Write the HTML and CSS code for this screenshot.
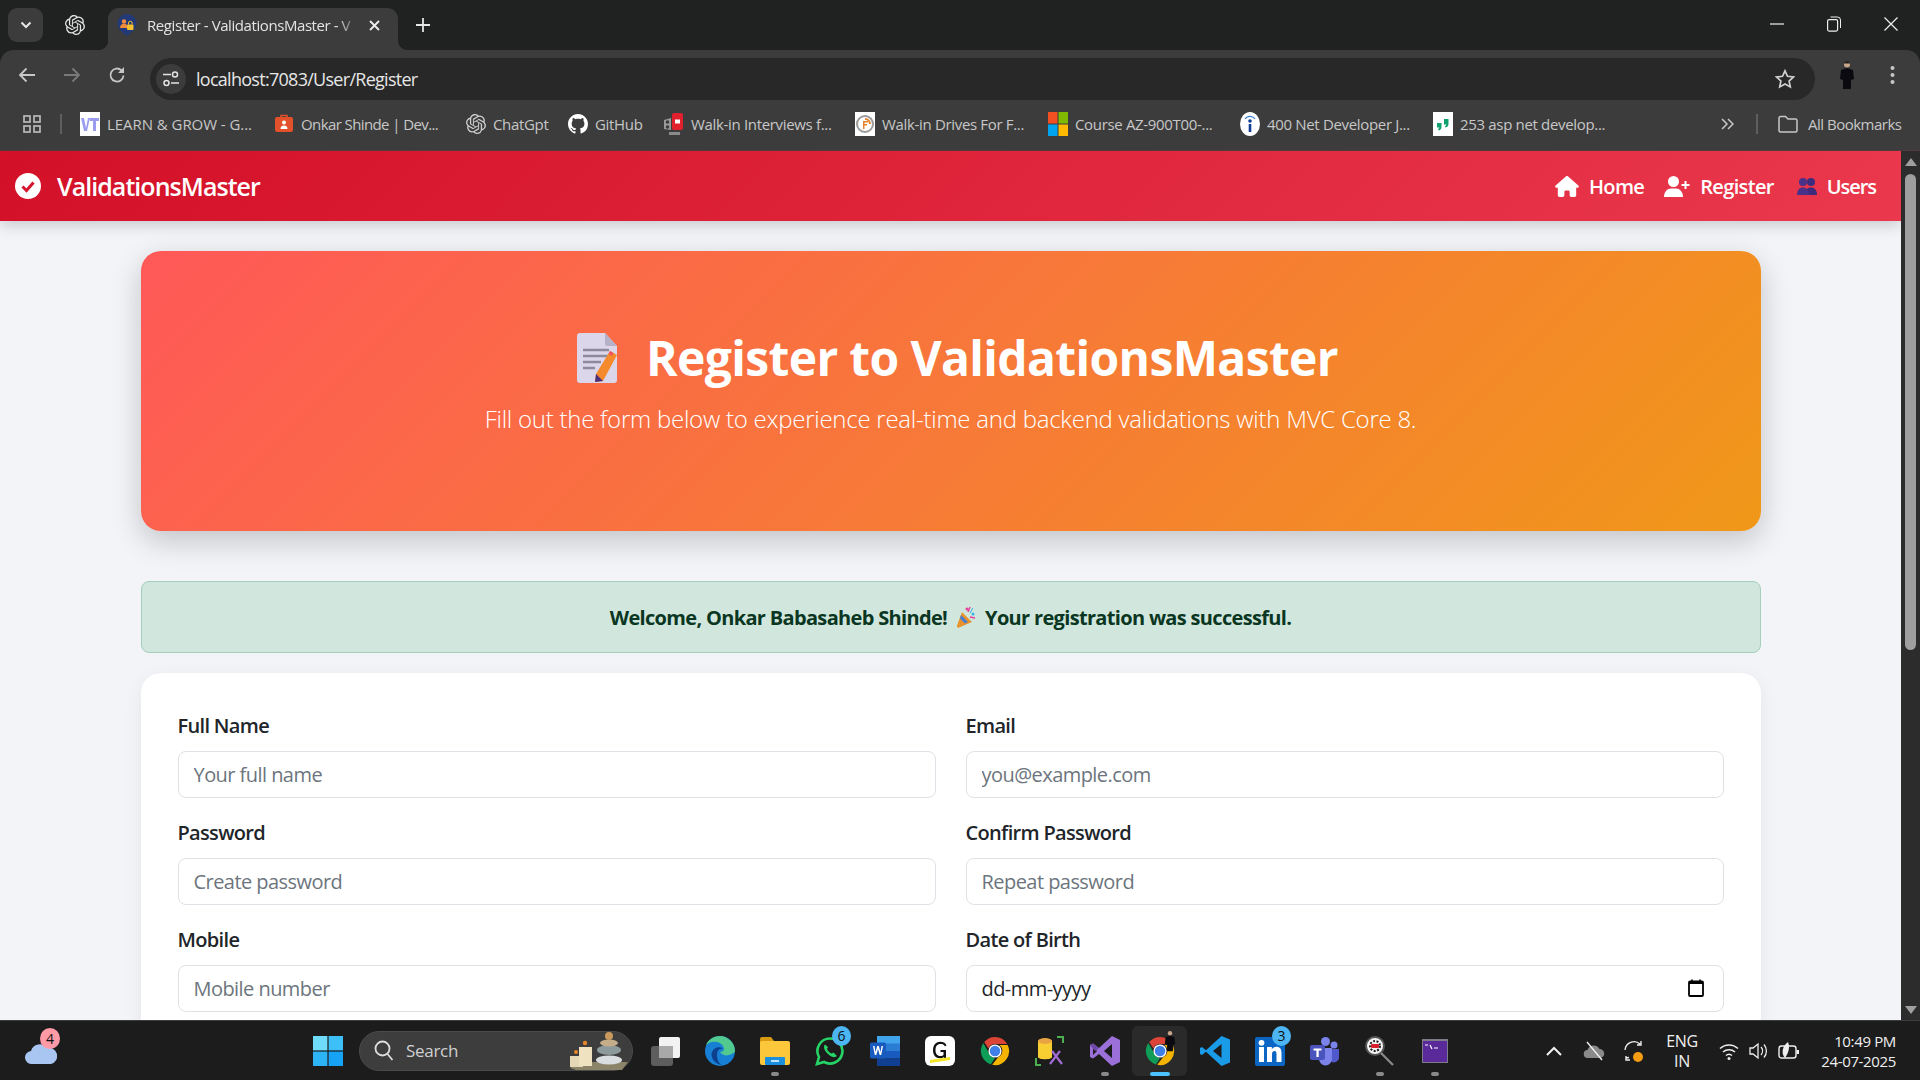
FILE: index.html
```html
<!DOCTYPE html>
<html lang="en">
<head>
<meta charset="utf-8">
<title>Register - ValidationsMaster</title>
<link rel="stylesheet" href="styles.css">
</head>
<body>
<svg class="defs" width="0" height="0" aria-hidden="true">
  <defs>
    <symbol id="knot" viewBox="0 0 24 24">
      <path fill="currentColor" d="M22.2819 9.8211a5.9847 5.9847 0 0 0-.5157-4.9108 6.0462 6.0462 0 0 0-6.5098-2.9A6.0651 6.0651 0 0 0 4.9807 4.1818a5.9847 5.9847 0 0 0-3.9977 2.9 6.0462 6.0462 0 0 0 .7427 7.0966 5.98 5.98 0 0 0 .511 4.9107 6.051 6.051 0 0 0 6.5146 2.9001A5.9847 5.9847 0 0 0 13.2599 24a6.0557 6.0557 0 0 0 5.7718-4.2058 5.9894 5.9894 0 0 0 3.9977-2.9001 6.0557 6.0557 0 0 0-.7475-7.0729zm-9.022 12.6081a4.4755 4.4755 0 0 1-2.8764-1.0408l.1419-.0804 4.7783-2.7582a.7948.7948 0 0 0 .3927-.6813v-6.7369l2.02 1.1686a.071.071 0 0 1 .038.052v5.5826a4.504 4.504 0 0 1-4.4945 4.4944zm-9.6607-4.1254a4.4708 4.4708 0 0 1-.5346-3.0137l.142.0852 4.783 2.7582a.7712.7712 0 0 0 .7806 0l5.8428-3.3685v2.3324a.0804.0804 0 0 1-.0332.0615L9.74 19.9502a4.4992 4.4992 0 0 1-6.1408-1.6464zM2.3408 7.8956a4.485 4.485 0 0 1 2.3655-1.9728V11.6a.7664.7664 0 0 0 .3879.6765l5.8144 3.3543-2.0201 1.1685a.0757.0757 0 0 1-.071 0l-4.8303-2.7865A4.504 4.504 0 0 1 2.3408 7.872zm16.5963 3.8558L13.1038 8.364 15.1192 7.2a.0757.0757 0 0 1 .071 0l4.8303 2.7913a4.4944 4.4944 0 0 1-.6765 8.1042v-5.6772a.79.79 0 0 0-.407-.667zm2.0107-3.0231l-.142-.0852-4.7735-2.7818a.7759.7759 0 0 0-.7854 0L9.409 9.2297V6.8974a.0662.0662 0 0 1 .0284-.0615l4.8303-2.7866a4.4992 4.4992 0 0 1 6.6802 4.66zM8.3065 12.863l-2.02-1.1638a.0804.0804 0 0 1-.038-.0567V6.0742a4.4992 4.4992 0 0 1 7.3757-3.4537l-.142.0805L8.704 5.459a.7948.7948 0 0 0-.3927.6813zm1.0976-2.3654l2.602-1.4998 2.6069 1.4998v2.9994l-2.5974 1.4997-2.6067-1.4997Z"/>
    </symbol>
    <symbol id="chrome" viewBox="0 0 32 32">
      <path fill="#db4437" d="M16 1a15 15 0 0 1 13 7.5H16a7.500 7.500 0 0 0-7 4.800L4.500 6.500A15 15 0 0 1 16 1z"/>
      <path fill="#0f9d58" d="M3.500 7.500l6.500 11.500a7.500 7.500 0 0 0 6 4.500L11.500 30.300A15 15 0 0 1 3.500 7.500z"/>
      <path fill="#f4b400" d="M29.500 9.500A15 15 0 0 1 13 30.700L19.500 22.500a7.500 7.500 0 0 0 1-13z"/>
      <circle cx="16" cy="16" r="7" fill="#fff"/>
      <circle cx="16" cy="16" r="5.600" fill="#3f7fe8"/>
    </symbol>
  </defs>
</svg>

<div class="screen">
  <header class="tabstrip">
    <button class="tabsearch" aria-label="Search tabs">
      <svg width="12" height="8" viewBox="0 0 12 8"><path d="M1.500 1.500 6 6l4.500-4.500" fill="none" stroke="#e6e6e6" stroke-width="2"/></svg>
    </button>
    <svg class="pinned" width="20" height="20"><use href="#knot"/></svg>
    <div class="tab">
      <svg class="favicon" width="20" height="22" viewBox="0 0 20 22">
        <path d="M10 0a9.500 9.500 0 0 1 9.500 9.500C19.500 15 14 19 10 22 6 19 .5 15 .5 9.500A9.500 9.500 0 0 1 10 0z" fill="#243a78"/>
        <circle cx="7" cy="7.500" r="2.200" fill="#f08a3c"/>
        <path d="M3 14c0-3 2-4.200 4-4.200 1.500 0 2.500.5 3 1.500V14z" fill="#f08a3c"/>
        <rect x="10" y="10.500" width="6.500" height="5.500" rx="1" fill="#f7c12e"/>
        <path d="M11.500 10.500V9a1.800 1.800 0 0 1 3.600 0v1.500" fill="none" stroke="#f7c12e"/>
      </svg>
      <span class="tabtitle">Register - ValidationsMaster - V</span>
      <svg class="tabclose" width="11" height="11" viewBox="0 0 11 11"><path d="M1 1l9 9M10 1l-9 9" stroke="#eee" stroke-width="1.800"/></svg>
    </div>
    <svg class="newtab" width="14" height="14" viewBox="0 0 14 14"><path d="M7 0v14M0 7h14" stroke="#e6e6e6" stroke-width="1.800"/></svg>
    <div class="winctrls">
      <svg width="14" height="14" viewBox="0 0 14 14"><path d="M0 7h14" stroke="#eee" stroke-width="1.200"/></svg>
      <svg width="14" height="16" viewBox="0 0 14 16"><rect x=".6" y="3.600" width="10" height="11.500" rx="1.500" fill="none" stroke="#eee" stroke-width="1.200"/><path d="M3.500 1h7a3 3 0 0 1 3 3v8" fill="none" stroke="#eee"/></svg>
      <svg width="14" height="14" viewBox="0 0 14 14"><path d="M.5.500l13 13M13.500.500l-13 13" stroke="#eee" stroke-width="1.200"/></svg>
    </div>
  </header>

  <div class="toolbar">
    <svg class="navbtn" width="18" height="16" viewBox="0 0 18 16"><path d="M17 8H2M8.500 1.500 2 8l6.500 6.500" fill="none" stroke="#c7c7c7" stroke-width="1.800"/></svg>
    <svg class="navbtn" width="18" height="16" viewBox="0 0 18 16"><path d="M1 8h15M9.500 1.500 16 8l-6.500 6.500" fill="none" stroke="#7a7a7a" stroke-width="1.800"/></svg>
    <svg class="navbtn" width="18" height="18" viewBox="0 0 18 18"><path d="M15.500 9.500A6.500 6.500 0 1 1 13.500 4.300L15.500 6.500" fill="none" stroke="#c7c7c7" stroke-width="1.800"/><path d="M16 1v6h-6" fill="#c7c7c7"/></svg>
    <div class="omnibox">
      <span class="siteinfo">
        <svg width="16" height="16" viewBox="0 0 16 16"><path d="M0 3.500h8M8 12h8" stroke="#e3e3e3" stroke-width="1.600" fill="none"/><circle cx="12" cy="3.500" r="2.500" fill="none" stroke="#e3e3e3" stroke-width="1.500"/><circle cx="3.500" cy="12" r="2.500" fill="none" stroke="#e3e3e3" stroke-width="1.500"/></svg>
      </span>
      <span class="url">localhost:7083/User/Register</span>
      <svg class="star" width="20" height="20" viewBox="0 0 20 20"><path d="M10 1.800l2.500 5.500 6 .7-4.400 4 1.200 5.900L10 15l-5.300 2.900 1.200-5.900-4.400-4 6-.7z" fill="none" stroke="#d0d0d0" stroke-width="1.700"/></svg>
    </div>
    <svg class="avatar" width="16" height="30" viewBox="0 0 16 30"><circle cx="8" cy="4.500" r="3" fill="#c9a58a"/><path d="M8 1c-2 0-3 1-3 2.500h6C11 2 10 1 8 1z" fill="#222"/><path d="M2 10l6-2 6 2 1 9-3 1v9H4v-9l-3-1z" fill="#0a0a10"/></svg>
    <svg class="kebab" width="5" height="20" viewBox="0 0 5 20"><circle cx="2.500" cy="3" r="2" fill="#c7c7c7"/><circle cx="2.500" cy="10" r="2" fill="#c7c7c7"/><circle cx="2.500" cy="17" r="2" fill="#c7c7c7"/></svg>
  </div>

  <nav class="bookmarks">
    <svg class="apps" width="18" height="18" viewBox="0 0 18 18"><g fill="none" stroke="#b9b9b9" stroke-width="1.700"><rect x="1" y="1" width="6" height="6"/><rect x="11" y="1" width="6" height="6"/><rect x="1" y="11" width="6" height="6"/><rect x="11" y="11" width="6" height="6"/></g></svg>
    <span class="barsep"></span>
    <div class="bmgrid">
      <a class="bm"><svg width="20" height="24" viewBox="0 0 20 24"><rect width="20" height="24" fill="#fff"/><path d="M1 6h3l2 10 2-10h2l-3 13H4zM10 6h9v3h-3v10h-3V9h-3z" fill="#9a9cf0"/></svg><span>LEARN &amp; GROW - G...</span></a>
      <a class="bm"><svg width="20" height="20" viewBox="0 0 20 20"><rect x="1" y="3" width="18" height="15" rx="2" fill="#e2512a"/><path d="M7 3V1.500h6V3" stroke="#e2512a" fill="none" stroke-width="1.500"/><circle cx="10" cy="8.500" r="2" fill="#fff"/><path d="M6.500 15c0-2.500 1.500-3.500 3.500-3.500s3.500 1 3.500 3.500z" fill="#fff"/></svg><span>Onkar Shinde | Dev...</span></a>
      <a class="bm knotbm"><svg width="20" height="20"><use href="#knot"/></svg><span>ChatGpt</span></a>
      <a class="bm"><svg width="20" height="20" viewBox="0 0 16 16"><path fill="#fff" d="M8 0C3.580 0 0 3.580 0 8c0 3.540 2.290 6.530 5.470 7.590.4.070.55-.17.55-.38 0-.19-.01-.82-.01-1.490-2.010.37-2.530-.49-2.690-.94-.09-.23-.48-.94-.82-1.130-.28-.15-.68-.52-.01-.53.63-.01 1.080.58 1.230.82.720 1.210 1.870.87 2.330.66.070-.52.280-.87.510-1.070-1.780-.2-3.640-.89-3.640-3.950 0-.87.310-1.590.820-2.150-.08-.2-.36-1.020.08-2.120 0 0 .67-.21 2.200.82.640-.18 1.320-.27 2-.27s1.360.09 2 .27c1.530-1.040 2.200-.82 2.200-.82.440 1.100.160 1.920.080 2.120.510.560.820 1.270.820 2.150 0 3.070-1.870 3.750-3.650 3.950.290.250.540.730.540 1.480 0 1.070-.010 1.930-.010 2.200 0 .21.150.46.550.38A8.010 8.010 0 0 0 16 8c0-4.420-3.580-8-8-8z"/></svg><span>GitHub</span></a>
      <a class="bm"><svg width="20" height="24" viewBox="0 0 20 24"><path d="M0 8l7-2v12l-7-1z" fill="#9a9a9a"/><circle cx="3.500" cy="10" r="1.800" fill="#3c3c3c"/><circle cx="3.500" cy="15" r="1.800" fill="#3c3c3c"/><rect x="8" y="1" width="11" height="17" rx="2" fill="#e0202c"/><rect x="11" y="7.500" width="5" height="4" fill="#fff"/><path d="M5 20h11v3H5z" fill="#8a8a8a"/></svg><span>Walk-in Interviews f...</span></a>
      <a class="bm"><svg width="20" height="24" viewBox="0 0 20 24"><rect width="20" height="24" fill="#fff"/><circle cx="10" cy="12" r="8" fill="none" stroke="#9a9a9a" stroke-width="2"/><path d="M10 7a5 5 0 0 1 5 5" fill="none" stroke="#e8832c" stroke-width="2"/><path d="M8 9h5v1.500H9.500V12H12v1.500H9.500V17H8z" fill="#e8832c"/></svg><span>Walk-in Drives For F...</span></a>
      <a class="bm"><svg width="20" height="24" viewBox="0 0 20 24"><rect width="9.500" height="11.500" fill="#f25022"/><rect x="10.500" width="9.500" height="11.500" fill="#7fba00"/><rect y="12.500" width="9.500" height="11.500" fill="#00a4ef"/><rect x="10.500" y="12.500" width="9.500" height="11.500" fill="#ffb900"/></svg><span>Course AZ-900T00-...</span></a>
      <a class="bm"><svg width="20" height="24" viewBox="0 0 20 24"><ellipse cx="10" cy="12" rx="10" ry="12" fill="#fff"/><circle cx="10" cy="9" r="1.800" fill="#123d96"/><rect x="8.700" y="12" width="2.600" height="8" fill="#123d96"/><path d="M5 7a6 6 0 0 1 10 0" fill="none" stroke="#3a7fd5" stroke-width="1.200"/></svg><span>400 Net Developer J...</span></a>
      <a class="bm"><svg width="20" height="24" viewBox="0 0 20 24"><rect width="20" height="24" fill="#fff"/><path d="M4 11h4.500v4c0 2-1 3-3 3.500L5 17c1-.3 1.300-1 1.300-1.500H4zM11 7h4.500v5c0 2-1 3-3 3.500L12 14c1-.3 1.300-1 1.300-1.500H11z" fill="#10a06c"/></svg><span>253 asp net develop...</span></a>
    </div>
    <svg class="more" width="13" height="12" viewBox="0 0 13 12"><path d="M1 1l5 5-5 5M7 1l5 5-5 5" fill="none" stroke="#c7c7c7" stroke-width="1.500"/></svg>
    <span class="barsep end"></span>
    <a class="bm allbm"><svg width="20" height="18" viewBox="0 0 20 18"><path d="M1 3a1.500 1.500 0 0 1 1.500-1.500h5L10 4h7.500A1.500 1.500 0 0 1 19 5.500v10a1.500 1.500 0 0 1-1.500 1.500h-15A1.500 1.500 0 0 1 1 15.500z" fill="none" stroke="#c7c7c7" stroke-width="1.500"/></svg><span>All Bookmarks</span></a>
  </nav>

  <div class="viewport">
    <div class="page">
      <div class="appbar">
        <a class="brand">
          <svg width="26" height="26" viewBox="0 0 26 26"><circle cx="13" cy="13" r="13" fill="#fff"/><path d="M7.500 13.500l4 4 7-8" fill="none" stroke="#d5152f" stroke-width="3"/></svg>
          <span>ValidationsMaster</span>
        </a>
        <div class="applinks">
          <a class="applink"><svg width="24" height="21" viewBox="0 0 576 512"><path fill="#fff" d="M575.800 255.500c0 18-15 32.100-32 32.100h-32l.7 160.200c0 2.700-.2 5.400-.5 8.100V472c0 22.100-17.900 40-40 40H392c-22.100 0-40-17.900-40-40v-88c0-17.700-14.300-32-32-32h-64c-17.700 0-32 14.300-32 32v88c0 22.100-17.900 40-40 40H104c-22.100 0-40-17.900-40-40V287.600H32c-18 0-32-14-32-32.100c0-9 3-17 10-24L266.400 8c7-7 15-8 22-8s15 2 21 7l255.400 224.500c8 7 12 15 11 24z"/></svg><span>Home</span></a>
          <a class="applink"><svg width="26" height="21" viewBox="0 0 26 21"><circle cx="9.500" cy="5.500" r="5.500" fill="#fff"/><path d="M0 21c0-5.500 3.500-8.500 7-8.500h5c3.500 0 7 3 7 8.500z" fill="#fff"/><path d="M21.500 5v8M17.500 9h8" stroke="#fff" stroke-width="2"/></svg><span>Register</span></a>
          <a class="applink"><svg width="20" height="18" viewBox="0 0 20 18"><circle cx="14" cy="5" r="4" fill="#3f2b7c"/><path d="M8 18c0-5 2.500-7.500 6-7.500s6 2.500 6 7.500z" fill="#3f2b7c"/><circle cx="6" cy="5" r="4" fill="#4a3188"/><path d="M0 18c0-5 2.500-7.500 6-7.500s6 2.500 6 7.500z" fill="#4a3188"/></svg><span>Users</span></a>
        </div>
      </div>

      <main class="content">
        <section class="hero">
          <h1 class="herotitle">
            <svg width="40" height="50" viewBox="0 0 40 50">
              <path d="M3 0h25l12 13v34a3 3 0 0 1-3 3H3a3 3 0 0 1-3-3V3a3 3 0 0 1 3-3z" fill="#dcd6ea"/>
              <path d="M28 0l12 13H30a2 2 0 0 1-2-2z" fill="#b7b0c9"/>
              <path d="M6 17h26M6 23h26M6 29h18M6 35h12" stroke="#8d8a9b" stroke-width="2.500"/>
              <path d="M33 18l7 4-14 26-8 1 1-8z" fill="#f58a2c"/>
              <path d="M33 18l3.500 2-1.500 3-3.500-2z" fill="#f2545f"/>
              <path d="M19 41l7 7-8 1z" fill="#4a2f7a"/>
            </svg>
            <span>Register to ValidationsMaster</span>
          </h1>
          <p class="herosub">Fill out the form below to experience real-time and backend validations with MVC Core 8.</p>
        </section>

        <div class="alert">
          <span>Welcome, Onkar Babasaheb Shinde!</span>
          <svg width="20" height="22" viewBox="0 0 20 22"><path d="M6 6l10 10-13 5.500a1.500 1.500 0 0 1-2-2z" fill="#e8932c"/><path d="M5 9l7 7-3 1.500-5-5z" fill="#4a7fd0"/><circle cx="11" cy="3" r="1.500" fill="#e83f9a"/><circle cx="17" cy="8" r="1.500" fill="#35b6e8"/><path d="M14 1l-2 5M19 12l-5-1" stroke="#e83f9a" stroke-width="1.500"/><path d="M17 2l-3 5" stroke="#35b6e8"/></svg>
          <span>Your registration was successful.</span>
        </div>

        <form class="card">
          <div class="field"><label class="lbl">Full Name</label><input class="inp" type="text" placeholder="Your full name"></div>
          <div class="field"><label class="lbl">Email</label><input class="inp" type="text" placeholder="you@example.com"></div>
          <div class="field"><label class="lbl">Password</label><input class="inp" type="text" placeholder="Create password"></div>
          <div class="field"><label class="lbl">Confirm Password</label><input class="inp" type="text" placeholder="Repeat password"></div>
          <div class="field"><label class="lbl">Mobile</label><input class="inp" type="text" placeholder="Mobile number"></div>
          <div class="field"><label class="lbl">Date of Birth</label>
            <div class="datewrap"><input class="inp" type="text" value="dd-mm-yyyy">
              <svg class="calicon" width="16" height="18" viewBox="0 0 16 18"><path d="M4 .5v3M12 .5v3" stroke="#000" stroke-width="1.600"/><rect x="1" y="2.500" width="14" height="14.500" rx="1" fill="none" stroke="#000" stroke-width="1.800"/><rect x="1" y="2.500" width="14" height="2.500" fill="#000"/></svg>
            </div>
          </div>
        </form>
      </main>
    </div>
    <div class="scrollbar">
      <span class="arrow up"></span>
      <span class="thumb"></span>
      <span class="arrow down"></span>
    </div>
  </div>

  <footer class="taskbar">
    <div class="weather">
      <svg width="32" height="22" viewBox="0 0 32 22"><path d="M7 22a6.500 6.500 0 0 1-1-13 9 9 0 0 1 16-3 7 7 0 0 1 4 16z" fill="#a9c6f2"/></svg>
      <span class="wbadge">4</span>
    </div>
    <svg class="winlogo" width="30" height="30" viewBox="0 0 30 30"><rect width="14.400" height="14.400" fill="#6fdcfb"/><rect x="15.600" width="14.400" height="14.400" fill="#3cc0f7"/><rect y="15.600" width="14.400" height="14.400" fill="#2db4f6"/><rect x="15.600" y="15.600" width="14.400" height="14.400" fill="#16a2f5"/></svg>
    <div class="tsearch">
      <svg width="20" height="21" viewBox="0 0 20 21"><circle cx="8.500" cy="8.500" r="7" fill="none" stroke="#ddd" stroke-width="1.800"/><path d="M13.500 14l5 6" stroke="#ddd" stroke-width="1.800"/></svg>
      <span class="tsearchlabel">Search</span>
      <svg class="candles" width="58" height="38" viewBox="0 0 58 38">
        <path d="M0 36l10-6h48l-6 8H6z" fill="#8b8468"/>
        <rect x="0" y="24" width="13" height="11" fill="#e4d8b6"/><rect x="9" y="15" width="13" height="19" fill="#eee2c0"/>
        <circle cx="6" cy="20" r="2" fill="#e8862a"/><circle cx="15" cy="11" r="2.200" fill="#e8862a"/>
        <ellipse cx="39" cy="28" rx="13" ry="4.500" fill="#dadde0"/><ellipse cx="39" cy="18" rx="12" ry="5" fill="#8c9a9c"/><ellipse cx="39" cy="11" rx="9" ry="3.500" fill="#c5ad89"/><circle cx="39" cy="4" r="4" fill="#c89a5e"/>
      </svg>
    </div>
    <div class="tapps">
      <span class="tapp"><svg width="30" height="30" viewBox="0 0 30 30"><rect x="1" y="10" width="22" height="20" rx="3" fill="#5d5d5d"/><rect x="9" y="1" width="21" height="21" rx="2" fill="#f2f2f2"/><rect x="9" y="10" width="14" height="12" fill="#a9a9a9"/></svg></span>
      <span class="tapp"><svg width="30" height="30" viewBox="0 0 30 30"><circle cx="15" cy="15" r="15" fill="#1780d4"/><path d="M30 15c0-8-7-15-15-15C8 0 3 4 1 9c3-3 7-4 11-3 4 1 7 4 7 7 0 2-2 3-4 3 2 3 6 4 9 3 4-1 6-3 6-4z" fill="#52c98f"/><path d="M12 18c0-4 3-6 6-5-3-3-9-2-11 3-2 6 3 12 10 13-4-2-5-6-5-11z" fill="#0d3f8c"/></svg></span>
      <span class="tapp"><svg width="30" height="30" viewBox="0 0 30 30"><path d="M0 3a2 2 0 0 1 2-2h9l3 4v5H0z" fill="#d89a12"/><rect y="5" width="30" height="24" rx="2" fill="#fcc73a"/><rect x="5" y="21" width="20" height="8" rx="1" fill="#1a8fe0"/><rect x="11" y="24" width="8" height="2" fill="#bfe3fb"/></svg><i class="pip"></i></span>
      <span class="tapp"><svg width="30" height="30" viewBox="0 0 30 30"><path d="M15 2.500A12.500 12.500 0 0 0 4 21l-2 7 7-2A12.500 12.500 0 1 0 15 2.500z" fill="none" stroke="#25d366" stroke-width="2.600"/><path d="M10 8.500c-2 2-1 6 3 9.500 4 3.500 7 4 9 2l-3.500-3.500-2 1c-2-1-3.500-2.500-4.500-4.500l1-2z" fill="#25d366"/></svg><b class="cbadge">6</b></span>
      <span class="tapp"><svg width="30" height="30" viewBox="0 0 30 30"><rect x="7" y="0" width="23" height="8" fill="#41a5ee"/><rect x="7" y="7.500" width="23" height="7.500" fill="#2b7cd3"/><rect x="7" y="15" width="23" height="7.500" fill="#185abd"/><rect x="7" y="22.500" width="23" height="7.500" fill="#103f91"/><rect x="0" y="6.500" width="16" height="16" rx="1.500" fill="#185abd"/><path d="M3 10l1.800 9h1.500L8 13l1.700 6h1.500L13 10h-1.500l-1 6-1.700-6H7.200l-1.700 6-1-6z" fill="#fff"/></svg></span>
      <span class="tapp"><svg width="30" height="30" viewBox="0 0 30 30"><rect width="30" height="30" rx="6" fill="#fff"/><path d="M20 10.500C19 8.500 17.500 8 15.500 8c-3.500 0-5 2.500-5 6s1.500 6 5 6c1.500 0 2.500-.5 3-1v-3h-3v-2h5.500v8h-2v-1c-1 1-2.500 1.200-4 1.200-4.500 0-7-3.500-7-8s2.500-8.500 7-8.500c3 0 5.500 1 6.500 3.500z" fill="#111"/><path d="M5 24l20-3v3L5 27z" fill="#f5e625"/></svg></span>
      <span class="tapp"><svg width="30" height="30"><use href="#chrome"/></svg></span>
      <span class="tapp"><svg width="30" height="30" viewBox="0 0 30 30"><path d="M3 5c0-3 14-3 14 0v16c0 3-14 3-14 0z" fill="#f8cf32"/><ellipse cx="10" cy="5" rx="7" ry="3" fill="#e8a442"/><path d="M22 1h6v6M6 29H1v-7" fill="none" stroke="#4caf50" stroke-width="2"/><path d="M15 28l10-13M27 28L17 15" stroke="#a36bd4" stroke-width="2.200"/></svg></span>
      <span class="tapp"><svg width="30" height="30" viewBox="0 0 30 30"><path d="M22 0l8 4v22l-8 4-13-12-6 4.500L0 21V9l3-1.500L9 12z" fill="#9b71d9"/><path d="M22 8l-8 7 8 7z" fill="#1c1c1c"/><path d="M3 11v8l4-4z" fill="#1c1c1c"/><path d="M0 9l3-1.500L9 12 5 15z" fill="#6f49a8"/></svg><i class="pip"></i></span>
      <span class="tapp active"><svg width="30" height="30"><use href="#chrome"/></svg>
        <svg class="chromeface" width="14" height="22" viewBox="0 0 16 30"><circle cx="8" cy="4.500" r="3" fill="#c9a58a"/><path d="M2 10l6-2 6 2 1 9-3 1v9H4v-9l-3-1z" fill="#0a0a10"/></svg>
        <i class="pip wide"></i></span>
      <span class="tapp"><svg width="30" height="30" viewBox="0 0 30 30"><path d="M21.500 0L30 3.500v23L21.500 30 6 15.800 2 19 0 18V12l2-1 4 3.200z" fill="#1a9be8"/><path d="M21.500 8l-8.500 7 8.500 7z" fill="#1c1c1c"/></svg></span>
      <span class="tapp"><svg width="30" height="30" viewBox="0 0 30 30"><rect y="1" width="30" height="29" rx="2" fill="#0a66c2"/><rect x="4" y="11" width="5" height="15" fill="#fff"/><circle cx="6.500" cy="6.800" r="2.900" fill="#fff"/><path d="M12 11h4.800v2.200c1-1.600 2.500-2.500 4.500-2.500 4 0 5.200 2.600 5.200 6.300V26h-5v-8c0-1.800-.5-3-2-3s-2.500 1.200-2.500 3v8h-5z" fill="#fff"/></svg><b class="cbadge">3</b></span>
      <span class="tapp"><svg width="30" height="30" viewBox="0 0 30 30"><circle cx="24" cy="9" r="3.500" fill="#7b83eb"/><circle cx="15.500" cy="5.500" r="4.500" fill="#7b83eb"/><path d="M19 13h10v9a5 5 0 0 1-8 3.500z" fill="#5059c9"/><path d="M8 12h14v11a6.500 6.500 0 0 1-13 0z" fill="#7b83eb"/><rect x="0" y="9" width="15" height="15" rx="2" fill="#4b53bc"/><path d="M3.500 12.500h8V14.500H8.700v6.500H6.400v-6.500H3.500z" fill="#fff"/></svg></span>
      <span class="tapp"><svg width="30" height="30" viewBox="0 0 30 30"><circle cx="10" cy="10" r="9" fill="#f4f4f4" stroke="#555" stroke-width="2"/><circle cx="10" cy="10" r="5" fill="none" stroke="#222" stroke-width="2" stroke-dasharray="2 1.500"/><rect x="6" y="8" width="8" height="4" rx="1" fill="#d8202c"/><path d="M16 17l12 12" stroke="#8a8a8a" stroke-width="2.200"/></svg><i class="pip"></i></span>
      <span class="tapp"><svg width="26" height="24" viewBox="0 0 26 24"><rect width="26" height="24" fill="#7c7c8a"/><rect x="1" y="2" width="24" height="21" fill="#5a2a9a"/><path d="M3 6h3M8 6l2 4M12 9h4" stroke="#fff" stroke-width="1.200"/></svg><i class="pip"></i></span>
    </div>
    <div class="tray">
      <svg class="trayup" width="16" height="10" viewBox="0 0 16 10"><path d="M1 9l7-7 7 7" fill="none" stroke="#f0f0f0" stroke-width="2"/></svg>
      <svg class="traydrive" width="22" height="20" viewBox="0 0 22 20"><path d="M5 17a4 4 0 0 1-.500-8 6.500 6.500 0 0 1 12-1 4.500 4.500 0 0 1 .5 9z" fill="#8a8a8a"/><path d="M4 1l15 18" stroke="#eee" stroke-width="1.400"/></svg>
      <svg class="traysync" width="22" height="24" viewBox="0 0 22 24"><path d="M2 11a9 9 0 0 1 15-6M18 2v4h-4M3 19l3-.500M3 17v4h4" fill="none" stroke="#eee" stroke-width="1.400"/><circle cx="15" cy="18" r="5" fill="#f59c12"/></svg>
      <div class="lang"><span>ENG</span><span>IN</span></div>
      <svg class="traywifi" width="20" height="18" viewBox="0 0 20 18"><path d="M1 6.500a13 13 0 0 1 18 0M4 10a9 9 0 0 1 12 0M7 13.500a4.500 4.500 0 0 1 6 0" fill="none" stroke="#eee" stroke-width="1.500"/><circle cx="10" cy="16.500" r="1.500" fill="#eee"/></svg>
      <svg class="trayvol" width="20" height="20" viewBox="0 0 20 20"><path d="M1 7h3l5-4v14l-5-4H1z" fill="none" stroke="#eee" stroke-width="1.300"/><path d="M12 6a6 6 0 0 1 0 8M15 3.500a10 10 0 0 1 0 13" fill="none" stroke="#eee" stroke-width="1.300"/></svg>
      <svg class="traybat" width="22" height="20" viewBox="0 0 22 20"><rect x="1" y="5" width="17" height="12" rx="2.500" fill="none" stroke="#eee" stroke-width="1.400"/><rect x="18.500" y="9" width="2.500" height="4" fill="#eee"/><path d="M7 17C3 13 4 5 10 1c2 5 1 10-3 16z" fill="#eee"/></svg>
      <div class="clock"><span>10:49 PM</span><span>24-07-2025</span></div>
    </div>
  </footer>
</div>
</body>
</html>
```

FILE: styles.css
```css
* { box-sizing: border-box; }
html, body { margin: 0; height: 100%; overflow: hidden; }
body { font-family: "Open Sans", "Noto Sans", sans-serif; background: #202221; }
.defs { position: absolute; }
.screen { display: flex; flex-direction: column; height: 1080px; width: 1920px; overflow: hidden; }
a { text-decoration: none; color: inherit; }

/* tab strip */
.tabstrip { height: 50px; flex: none; background: #202221; display: flex; align-items: center; color: #e6e6e6; }
.tabsearch { margin-left: 8px; width: 35px; height: 34px; border: 0; border-radius: 9px; background: #3c3c3c; display: flex; align-items: center; justify-content: center; padding: 0; }
.pinned { margin-left: 22px; color: #e6e6e6; }
.tab { position: relative; margin-left: 23px; align-self: flex-end; width: 290px; height: 42px; background: #3c3c3c; border-radius: 11px 11px 0 0; display: flex; align-items: center; padding: 0 0 8px 9px; }
.tab::before, .tab::after { content: ""; position: absolute; bottom: 0; width: 10px; height: 10px; }
.tab::before { left: -10px; background: radial-gradient(circle at 0 0, transparent 10px, #3c3c3c 10.5px); }
.tab::after { right: -10px; background: radial-gradient(circle at 100% 0, transparent 10px, #3c3c3c 10.5px); }
.favicon { flex: none; }
.tabtitle { margin-left: 10px; width: 212px; overflow: hidden; white-space: nowrap; font-size: 15px; letter-spacing: -.42px; color: #e3e3e3; -webkit-mask-image: linear-gradient(90deg, #000 90%, transparent); mask-image: linear-gradient(90deg, #000 90%, transparent); }
.tabclose { margin-left: 10px; }
.newtab { margin-left: 18px; }
.winctrls { margin-left: auto; display: flex; align-items: center; gap: 43px; padding: 0 22px 2px 0; }

/* toolbar */
.toolbar { height: 50px; flex: none; background: #3c3c3c; border-radius: 14px 14px 0 0; display: flex; align-items: center; padding-left: 18px; }
.navbtn { margin-right: 27px; flex: none; }
.navbtn:nth-child(3) { margin-right: 24px; }
.omnibox { align-self: flex-start; width: 1665px; height: 42px; border-radius: 21px; background: #282828; display: flex; align-items: center; padding-left: 6px; margin-top: 8px; }
.siteinfo { width: 30px; height: 30px; border-radius: 50%; background: #3c3c3c; display: flex; align-items: center; justify-content: center; }
.url { margin-left: 10px; font-size: 18px; letter-spacing: -.72px; color: #e6e6e6; }
.star { margin-left: auto; margin-right: 20px; }
.avatar { margin-left: 24px; }
.kebab { margin-left: 35px; }

/* bookmarks */
.bookmarks { height: 51px; flex: none; background: #3c3c3c; border-bottom: 1px solid #51393d; display: flex; align-items: center; padding-left: 23px; padding-bottom: 2px; }
.apps { flex: none; }
.barsep { width: 2px; height: 20px; background: #5e5e5e; margin-left: 19px; flex: none; }
.bmgrid { margin-left: 18px; display: grid; grid-template-columns: 194px 192px 102px 96px 191px 193px 192px 193px 200px; }
.bm { display: flex; align-items: center; gap: 7px; font-size: 15px; letter-spacing: -.33px; color: #c7c7c7; white-space: nowrap; }
.bm:nth-child(1) { letter-spacing: -.05px; }
.bm:nth-child(2) { letter-spacing: -.6px; }
.bm svg { flex: none; }
.knotbm svg { color: #d0d0d0; }
.more { margin-left: 88px; flex: none; }
.barsep.end { margin-left: 22px; }
.allbm { margin-left: 20px; gap: 10px; letter-spacing: -.5px; }

/* viewport */
.viewport { flex: 1; min-height: 0; display: flex; }
.page { flex: 1; min-width: 0; background: #f3f4f8; overflow: hidden; }
.scrollbar { width: 19px; flex: none; background: #2c2c2c; display: flex; flex-direction: column; align-items: center; padding: 7px 0 6px; }
.arrow { width: 0; height: 0; border-left: 6.500px solid transparent; border-right: 6.500px solid transparent; }
.arrow.up { border-bottom: 8px solid #9f9f9f; }
.arrow.down { border-top: 8px solid #9f9f9f; margin-top: auto; }
.thumb { width: 11px; height: 476px; margin-top: 8px; background: #9f9f9f; border-radius: 6px; }

/* app bar */
.appbar { height: 70px; background: linear-gradient(135deg, #d31027, #ea384d); box-shadow: 0 4px 14px rgba(0, 0, 0, .18); display: flex; align-items: center; justify-content: space-between; color: #fff; padding: 0 25px 0 15px; position: relative; }
.brand { display: flex; align-items: center; gap: 16px; font-size: 25px; font-weight: 600; letter-spacing: -.95px; }
.applinks { display: flex; align-items: center; gap: 21px; }
.applink { display: flex; align-items: center; gap: 10px; font-size: 20px; font-weight: 600; letter-spacing: -.65px; }
.applink:first-child { margin-right: -1px; }
.applink:last-child { margin-left: 2px; letter-spacing: -1.05px; }

/* content */
.content { width: 1620px; margin: 30px auto 0; }
.hero { height: 280px; border-radius: 20px; background: linear-gradient(135deg, #ff5858, #f09819); box-shadow: 0 10px 30px rgba(0, 0, 0, .2); color: #fff; display: flex; flex-direction: column; align-items: center; padding-top: 76px; }
.herotitle { margin: 0; padding-left: 14px; display: flex; align-items: center; gap: 29px; font-size: 48px; font-weight: 700; line-height: 62px; letter-spacing: -.65px; }
.herosub { margin: 12px 0 0; font-size: 24px; font-weight: 300; line-height: 36px; letter-spacing: -.25px; }
.alert { margin-top: 50px; height: 72px; border: 1px solid #a3cfbb; border-radius: 8px; background: #d1e7dd; color: #0a3622; display: flex; align-items: center; justify-content: center; gap: 9px; font-size: 20px; font-weight: 700; letter-spacing: -.67px; }
.card { margin-top: 20px; background: #fff; border-radius: 20px; box-shadow: 0 5px 20px rgba(0, 0, 0, .06); padding: 38px 37px 37px; display: grid; grid-template-columns: 1fr 1fr; column-gap: 30px; row-gap: 20px; height: 420px; align-content: start; }
.field { display: flex; flex-direction: column; }
.lbl { font-size: 20px; line-height: 30px; font-weight: 600; color: #212529; letter-spacing: -.67px; margin-bottom: 10px; }
.inp { width: 100%; height: 47px; border: 1px solid #dee2e6; border-radius: 8px; background: #fff; padding: 0 15px; font: 400 20px "Open Sans", "Noto Sans", sans-serif; letter-spacing: -.55px; color: #212529; display: block; }
.inp::placeholder { color: #6c757d; opacity: 1; }
.datewrap { position: relative; }
.calicon { position: absolute; right: 20px; top: 14px; }

/* task bar */
.taskbar { height: 60px; flex: none; background: #1c1c1c; border-top: 1px solid #3d3d3d; display: flex; align-items: center; position: relative; }
.taskbar > * { flex: none; }
.weather { position: relative; margin-left: 25px; width: 32px; height: 22px; margin-top: 5px; }
.wbadge { position: absolute; left: 15px; top: -14px; width: 20px; height: 21px; border-radius: 50%; background: #ff9aa6; color: #111; font-size: 14px; line-height: 21px; text-align: center; }
.winlogo { margin-left: 256px; }
.tsearch { margin-left: 16px; width: 274px; height: 40px; border-radius: 20px; background: #3d3d3d; border: 1px solid #4a4a4a; display: flex; align-items: center; padding-left: 14px; color: #d0d0d0; }
.tsearchlabel { margin-left: 12px; font-size: 17px; letter-spacing: -.3px; }
.candles { margin-left: auto; margin-right: 4px; }
.tapps { display: flex; margin-left: 4px; }
.tapp { position: relative; width: 55px; height: 50px; flex: none; display: flex; align-items: center; justify-content: center; border-radius: 6px; }
.tapp.active { background: #2a2a2a; }
.pip { position: absolute; bottom: 0; left: 50%; width: 8px; height: 4px; margin-left: -4px; border-radius: 2px; background: #8a8a8a; }
.pip.wide { width: 20px; margin-left: -10px; background: #4cc2ff; }
.cbadge { position: absolute; left: 30px; top: 0; width: 19px; height: 20px; border-radius: 50%; background: #4cb6f5; color: #111; font-size: 14px; font-weight: 400; line-height: 20px; text-align: center; }
.chromeface { position: absolute; left: 31px; top: 4px; }
.tray { display: flex; align-items: center; color: #f0f0f0; }
.tray > * { flex: none; }
.trayup { margin-left: 84px; }
.traydrive { margin-left: 21px; }
.traysync { margin-left: 18px; }
.lang { margin-left: 11px; width: 52px; display: flex; flex-direction: column; align-items: center; font-size: 16px; line-height: 20px; letter-spacing: -.3px; }
.traywifi { margin-left: 11px; }
.trayvol { margin-left: 10px; }
.traybat { margin-left: 9px; }
.clock { margin-left: 6px; width: 90px; display: flex; flex-direction: column; align-items: flex-end; font-size: 15px; line-height: 20px; letter-spacing: -.35px; white-space: nowrap; }
```
